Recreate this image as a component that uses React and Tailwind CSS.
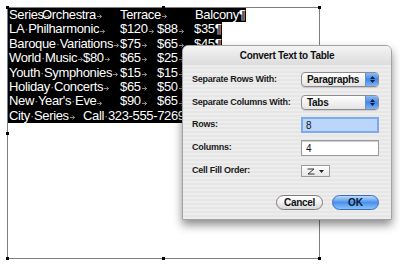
import React from 'react';

// tab stops measured off the ruler: 9, 42, 83, 120, 157, 194
// rows 4-7 run on under the sheet, so only a black tail is kept there
const ROWS = [
    [['Series', 33], ['Orchestra', 78], ['Terrace', 75], ['Balcony¶']],
    [['LA Philharmonic', 111], ['$120', 37], ['$88', 37], ['$35¶']],
    [['Baroque Variations', 111], ['$75', 37], ['$65', 37], ['$45¶']],
    [['World Music', 74], ['$80', 37], ['$65', 37], ['$25', 37], ['', 12]],
    [['Youth Symphonies', 111], ['$15', 37], ['$15', 37], ['', 12]],
    [['Holiday Concerts', 111], ['$65', 37], ['$50', 37], ['', 12]],
    [["New Year's Eve", 111], ['$90', 37], ['$65', 37], ['', 12]],
    [['City Series', 74], ['Call 323-555-7269¶']],
];

function TabArrow() {
    return (
        <svg width="6" height="5" viewBox="0 0 6 5" className="ml-[1px] mt-[3px] shrink-0">
            <path d="M0 2.5H4.5M2.5 0.6L4.6 2.5L2.5 4.4" stroke="#9a9a9a" strokeWidth="0.9" fill="none" />
        </svg>
    );
}

function Words({ text }) {
    const parts = text.split(' ');
    return parts.map((w, i) => (
        <React.Fragment key={i}>
            {i > 0 && <span className="text-[#8a8a8a]">·</span>}
            {w}
        </React.Fragment>
    ));
}

function Handle({ className }) {
    return <div className={`absolute w-[3px] h-[3px] bg-black ${className}`} />;
}

function Popup({ label }) {
    return (
        <div className="flex h-[15px] w-[79px] items-stretch rounded-[4px] border border-[#8c8c8c] bg-gradient-to-b from-white to-[#e4e4e4] shadow-[0_1px_0_rgba(0,0,0,0.12)] overflow-hidden">
            <div className="flex-1 pl-[5px] text-[10px] font-bold leading-[13px] tracking-[-0.3px] text-[#111]">{label}</div>
            <div className="flex w-[13px] flex-col items-center justify-center gap-[1px] bg-gradient-to-b from-[#8dbaf5] via-[#4486e6] to-[#7fb3f3] border-l border-[#6a8fc4]">
                <svg width="5" height="3" viewBox="0 0 5 3"><path d="M0 3L2.5 0L5 3Z" fill="#0d1f40" /></svg>
                <svg width="5" height="3" viewBox="0 0 5 3"><path d="M0 0L2.5 3L5 0Z" fill="#0d1f40" /></svg>
            </div>
        </div>
    );
}

function Label({ children }) {
    return <div className="w-[109px] shrink-0 whitespace-nowrap text-[9px] font-bold tracking-[-0.25px] text-[#1a1a1a]">{children}</div>;
}

export default function App() {
    return (
        <div className="relative h-[266px] w-[400px] overflow-hidden bg-white font-['Liberation_Sans',Arial,sans-serif]">
            {/* text frame */}
            <div className="relative ml-[7px] mt-[7px] h-[252px] w-[313px] border border-[#7f7f7f]">
                <div className="text-[13px] leading-[14.4px] tracking-[-0.35px] text-white">
                    {ROWS.map((row, r) => (
                        <div key={r} className="flex">
                            <div className="flex bg-black pl-[1px] pr-[1px]">
                                {row.map(([t, w], i) => (
                                    <div
                                        key={i}
                                        className="flex shrink-0 items-center whitespace-nowrap"
                                        style={w ? { width: w } : undefined}
                                    >
                                        {t && <Words text={t} />}
                                        {t && w && <TabArrow />}
                                    </div>
                                ))}
                            </div>
                        </div>
                    ))}
                </div>
                <Handle className="-left-[2px] -top-[2px]" />
                <Handle className="left-[154px] -top-[2px]" />
                <Handle className="-right-[2px] -top-[2px]" />
                <Handle className="-left-[2px] top-[124px]" />
                <Handle className="-right-[2px] top-[124px]" />
                <Handle className="-left-[2px] -bottom-[2px]" />
                <Handle className="left-[154px] -bottom-[2px]" />
                <Handle className="-right-[2px] -bottom-[2px]" />
            </div>

            {/* Convert Text to Table sheet */}
            <div className="absolute left-[182px] top-[45px] flex h-[175px] w-[210px] flex-col overflow-hidden rounded-t-[6px] border border-[#a3a3a3] bg-[repeating-linear-gradient(0deg,#ededed_0px,#ededed_2px,#e6e6e6_2px,#e6e6e6_4px)] shadow-[0_5px_10px_rgba(0,0,0,0.45)]">
                <div className="flex h-[19px] items-center justify-center bg-gradient-to-b from-[#f4f4f4] to-[#dcdcdc] text-[10px] font-bold tracking-[-0.3px] text-[#111]">
                    Convert Text to Table
                </div>
                <div className="flex flex-col pl-[9px] pr-[12px] pt-[7px]">
                    <div className="flex h-[15px] items-center">
                        <Label>Separate Rows With:</Label>
                        <Popup label="Paragraphs" />
                    </div>
                    <div className="mt-[8px] flex h-[15px] items-center">
                        <Label>Separate Columns With:</Label>
                        <Popup label="Tabs" />
                    </div>
                    <div className="mt-[7px] flex h-[16px] items-center">
                        <Label>Rows:</Label>
                        <div className="flex h-[16px] w-[80px] items-center border-2 border-[#7eaaea] bg-[#bad6fb] pl-[3px] text-[10px] text-[#111]">8</div>
                    </div>
                    <div className="mt-[7px] flex h-[16px] items-center">
                        <Label>Columns:</Label>
                        <div className="flex h-[16px] w-[79px] items-center border border-[#9a9a9a] bg-white pl-[4px] text-[10px] text-[#111] shadow-[inset_0_1px_1px_rgba(0,0,0,0.2)]">4</div>
                    </div>
                    <div className="mt-[9px] flex h-[12px] items-center">
                        <Label>Cell Fill Order:</Label>
                        <div className="flex h-[12px] w-[29px] items-center justify-center gap-[4px] border border-[#9c9c9c] bg-gradient-to-b from-white to-[#e6e6e6]">
                            <svg width="8" height="7" viewBox="0 0 8 7">
                                <path d="M0.5 1H7L1 6H7.5" stroke="#333" strokeWidth="1" fill="none" />
                            </svg>
                            <svg width="5" height="3" viewBox="0 0 5 3"><path d="M0 0L2.5 3L5 0Z" fill="#222" /></svg>
                        </div>
                    </div>
                    <div className="mt-[18px] flex justify-end gap-[9px]">
                        <div className="flex h-[15px] w-[47px] items-center justify-center rounded-full border border-[#7d7d7d] bg-gradient-to-b from-white via-[#f1f1f1] to-[#d6d6d6] text-[10px] font-bold tracking-[-0.3px] text-[#111]">
                            Cancel
                        </div>
                        <div className="flex h-[15px] w-[47px] items-center justify-center rounded-full border border-[#3b6cb8] bg-gradient-to-b from-[#bcd9fb] via-[#4a92ec] to-[#8cc1fa] text-[10px] font-bold text-[#0c1a33]">
                            OK
                        </div>
                    </div>
                </div>
            </div>
        </div>
    );
}
